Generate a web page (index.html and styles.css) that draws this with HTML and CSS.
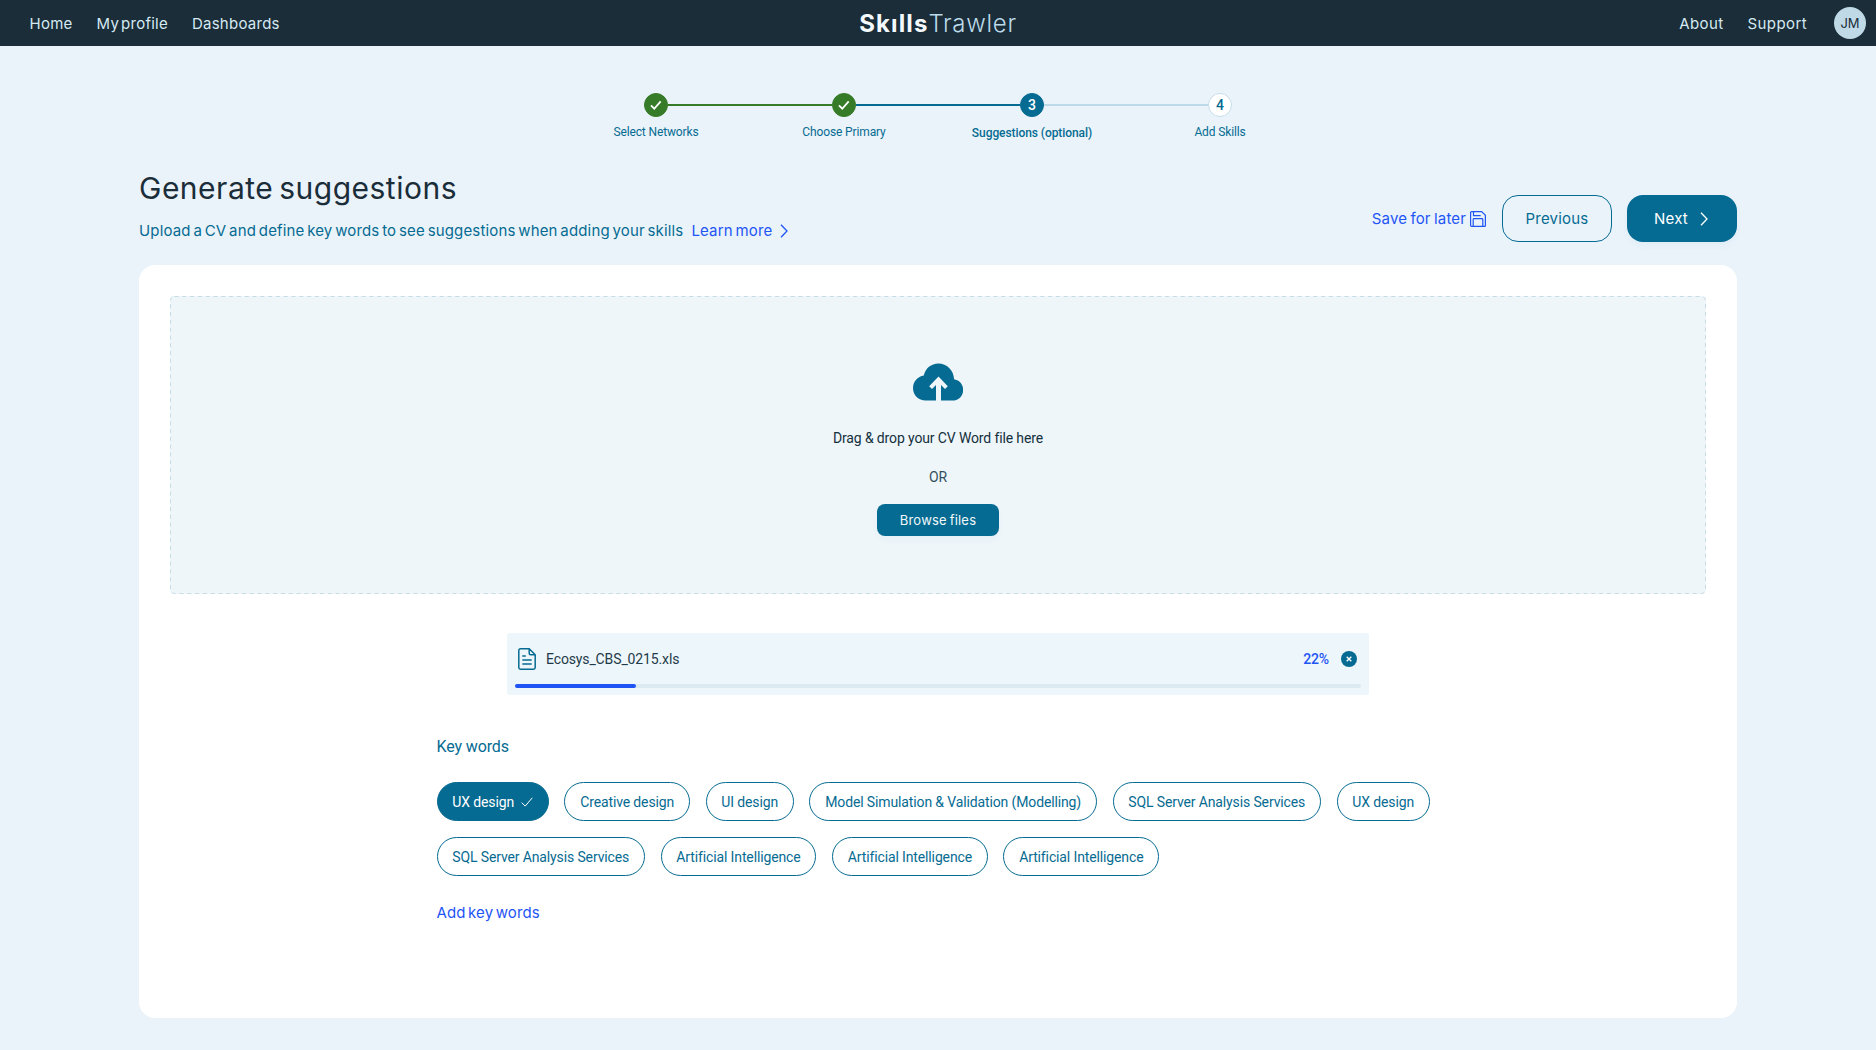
FILE: index.html
```html
<!DOCTYPE html>
<html lang="en">
<head>
    <meta charset="UTF-8">
    <meta name="viewport" content="width=device-width, initial-scale=1.0">
    <title>SkillsTrawler - Generate suggestions</title>
    <link rel="stylesheet" href="styles.css">
</head>
<body>
    <header class="topbar">
        <nav class="nav nav-left">
            <a href="#">Home</a>
            <a href="#">My profile</a>
            <a href="#">Dashboards</a>
        </nav>
        <div class="logo"><b>Skılls</b><span>Trawler</span></div>
        <nav class="nav nav-right">
            <a href="#">About</a>
            <a href="#">Support</a>
            <span class="avatar">JM</span>
        </nav>
    </header>

    <!-- Progress steps -->
    <ol class="stepper">
        <li class="step done">
            <span class="dot"><svg viewBox="0 0 24 24"><path d="M6.5 12.5l3.6 3.6 7-8"/></svg></span>
            <span class="step-label">Select Networks</span>
        </li>
        <li class="step done">
            <span class="dot"><svg viewBox="0 0 24 24"><path d="M6.5 12.5l3.6 3.6 7-8"/></svg></span>
            <span class="step-label">Choose Primary</span>
        </li>
        <li class="step current">
            <span class="dot">3</span>
            <span class="step-label">Suggestions (optional)</span>
        </li>
        <li class="step">
            <span class="dot">4</span>
            <span class="step-label">Add Skills</span>
        </li>
    </ol>

    <main class="container">
        <div class="page-head">
            <div>
                <h1>Generate suggestions</h1>
                <p class="intro">
                    <span>Upload a CV and define key words to see suggestions when adding your skills</span>
                    <a href="#">Learn more</a>
                    <svg class="chevron" viewBox="0 0 8 14"><path d="M1 .8l6 6.2-6 6.2"/></svg>
                </p>
            </div>
            <div class="actions">
                <a href="#" class="save">
                    <span>Save for later</span>
                    <svg viewBox="0 0 16 16"><path d="M.6 1.6a1 1 0 0 1 1-1h10l3.8 3.6v10.200a1 1 0 0 1-1 1H1.600a1 1 0 0 1-1-1z M3.200 15.400V8.500a.8.8 0 0 1 .8-.8h8a.8.8 0 0 1 .8.8v6.900 M3.500.6v4h7.200"/></svg>
                </a>
                <button class="button button-outline">Previous</button>
                <button class="button button-primary">Next
                    <svg class="chevron" viewBox="0 0 8 14"><path d="M1 .8l6 6.2-6 6.2"/></svg>
                </button>
            </div>
        </div>

        <section class="card">
            <!-- Upload area -->
            <div class="dropzone">
                <svg class="dashes"><rect x=".5" y=".5" width="1535" height="297" rx="4"/></svg>
                <svg class="cloud" viewBox="0 0 50 38"><path d="M23 37.500H12.500C5.500 37.500 0 32 0 25.200 0 18.800 4.600 13.600 10.800 12.600 12.300 5.400 18.200.500 25.400.500c8.300 0 15.200 6.500 15.700 15.700C46.200 17 50.200 21.400 50.200 26.800c0 6-4.700 10.700-10.600 10.700H28V22l4 4 2.800-2.800-9.300-9.700-9.300 9.700L19 26l4-4z"/></svg>
                <p class="drop-text">Drag &amp; drop your CV Word file here</p>
                <p class="drop-or">OR</p>
                <button class="browse">Browse files</button>
            </div>

            <!-- File in progress -->
            <div class="file">
                <div class="file-row">
                    <svg class="file-icon" viewBox="0 0 18 22"><path d="M2.500.8h8.700l6 6v12.700a1.700 1.700 0 0 1-1.700 1.700h-13A1.700 1.700 0 0 1 .8 19.500v-17A1.700 1.700 0 0 1 2.500.8z M11.200.8v4.500a1.500 1.500 0 0 0 1.500 1.500h4.500 M4.300 8h3.500 M4.300 12h9.400 M4.300 16h9.400"/></svg>
                    <span class="file-name">Ecosys_CBS_0215.xls</span>
                    <span class="file-percent">22%</span>
                    <svg class="file-cancel" viewBox="0 0 16 16"><circle cx="8" cy="8" r="8"/><path d="M5.700 5.700l4.600 4.600 M10.300 5.700l-4.600 4.600"/></svg>
                </div>
                <div class="progress"><div class="progress-fill"></div></div>
            </div>

            <!-- Key words -->
            <div class="keywords">
                <h2>Key words</h2>
                <div class="chips">
                    <span class="chip selected">UX design <svg viewBox="0 0 12 10"><path d="M.7 5.600l3.500 3.500L11.300.8"/></svg></span>
                    <span class="chip">Creative design</span>
                    <span class="chip">UI design</span>
                    <span class="chip">Model Simulation &amp; Validation (Modelling)</span>
                    <span class="chip">SQL Server Analysis Services</span>
                    <span class="chip">UX design</span>
                    <span class="chip">SQL Server Analysis Services</span>
                    <span class="chip">Artificial Intelligence</span>
                    <span class="chip">Artificial Intelligence</span>
                    <span class="chip">Artificial Intelligence</span>
                </div>
                <a href="#" class="add-link">Add key words</a>
            </div>
        </section>
    </main>
</body>
</html>
```
FILE: styles.css
```css
* {
    box-sizing: border-box;
}
body {
    margin: 0;
    height: 1050px;
    overflow: hidden;
    background-color: #eaf3fa;
    color: #066b92;
    font-family: Roboto, sans-serif;
    font-size: 14px;
    letter-spacing: -0.13px;
}
h1, h2, p, ol {
    margin: 0;
    padding: 0;
    font-weight: 400;
}
a {
    color: #1f55f5;
    text-decoration: none;
}
svg {
    display: block;
    flex: none;
    fill: none;
    stroke: currentColor;
}
button {
    font-family: Inter, sans-serif;
    border: 0;
}

/* Top bar */
.topbar {
    display: grid;
    grid-template-columns: 1fr auto 1fr;
    align-items: center;
    height: 46px;
    padding: 0 10px;
    background-color: #1a2d38;
    font-family: Inter, sans-serif;
}
.nav {
    display: flex;
    align-items: center;
    gap: 24px;
    font-size: 15px;
    letter-spacing: 0.25px;
    word-spacing: -2.5px;
}
.nav a {
    color: #d5e9f3;
}
.nav-left {
    padding-left: 19.5px;
}
.nav-right {
    justify-content: flex-end;
    letter-spacing: 0.4px;
}
.avatar {
    display: flex;
    align-items: center;
    justify-content: center;
    width: 32px;
    height: 32px;
    margin-left: 3px;
    border-radius: 50%;
    background-color: #bfd9e7;
    color: #1a2d38;
    font-size: 13px;
    letter-spacing: 0;
}
.logo {
    display: flex;
    font-size: 24px;
    color: #bcdaea;
}
.logo b {
    color: #f3f9fc;
    font-weight: 700;
    letter-spacing: 1.1px;
}
.logo span {
    font-weight: 300;
    letter-spacing: 0.7px;
}

/* Stepper */
.stepper {
    display: flex;
    justify-content: center;
    width: 752px;
    margin: 47px auto 1px;
    list-style: none;
}
.step {
    position: relative;
    display: flex;
    flex-direction: column;
    align-items: center;
    width: 188px;
    font-size: 12px;
    line-height: 14px;
}
.step:not(:last-child)::after {
    content: "";
    position: absolute;
    top: 11px;
    left: 106px;
    width: 164px;
    height: 2px;
    background-color: #bcdae7;
}
.step:nth-child(1)::after {
    background-color: #357b28;
}
.step:nth-child(2)::after {
    background-color: #066b92;
}
.dot {
    display: flex;
    align-items: center;
    justify-content: center;
    width: 24px;
    height: 24px;
    margin-bottom: 8px;
    border: 1px solid #c6dfea;
    border-radius: 50%;
    background-color: #fff;
    font-size: 14px;
    font-weight: 500;
}
.dot svg {
    width: 22px;
    height: 22px;
    stroke-width: 2;
}
.done .dot {
    border-color: #357b28;
    background-color: #357b28;
    color: #fff;
}
.current .dot {
    border-color: #066b92;
    background-color: #066b92;
    color: #fff;
}
.current .step-label {
    font-weight: 500;
    letter-spacing: -0.07px;
    padding-top: 1px;
}

/* Page heading */
.container {
    width: 1598px;
    margin: 0 auto;
}
.page-head {
    display: flex;
    justify-content: space-between;
    height: 124px;
    font-family: Inter, sans-serif;
}
h1 {
    margin-top: 28px;
    color: #1a2d38;
    font-size: 30px;
    line-height: 38px;
    letter-spacing: 0.5px;
    word-spacing: -3px;
}
.intro {
    display: flex;
    align-items: center;
    margin-top: 14px;
    font-size: 15px;
    line-height: 20px;
    letter-spacing: 0.15px;
    word-spacing: -1.6px;
}
.intro a {
    margin-left: 8px;
}
.chevron {
    width: 8px;
    height: 14px;
    stroke-width: 1.3;
}
.intro .chevron {
    margin-left: 8px;
    color: #1f55f5;
}
.actions {
    display: flex;
    align-items: center;
    height: 47px;
    margin-top: 54px;
    letter-spacing: 0.15px;
}
.save {
    display: flex;
    align-items: center;
    gap: 4px;
    margin-right: 16px;
    font-size: 15px;
    word-spacing: -1px;
}
.save svg {
    width: 16px;
    height: 16px;
    stroke-width: 1.2;
}
.button {
    display: flex;
    align-items: center;
    justify-content: center;
    width: 110px;
    height: 47px;
    border-radius: 16px;
    font-size: 15px;
    letter-spacing: 0.2px;
}
.button-outline {
    margin-right: 15px;
    border: 1px solid #066b92;
    background: transparent;
    color: #066b92;
}
.button-primary {
    gap: 12px;
    padding-left: 4px;
    background-color: #066b92;
    color: #fff;
    box-shadow: 0 4px 6px rgba(6, 107, 146, 0.04);
}

/* Card */
.card {
    height: 753px;
    padding: 31px;
    border-radius: 16px;
    background-color: #fff;
}
.dropzone {
    position: relative;
    display: flex;
    flex-direction: column;
    align-items: center;
    height: 298px;
    padding-top: 67px;
    border-radius: 4px;
    background-color: #eef6fa;
}
.dashes {
    position: absolute;
    top: 0;
    left: 0;
    width: 100%;
    height: 100%;
    stroke: #c5dbe5;
    stroke-dasharray: 4 3.8;
}
.cloud {
    width: 50px;
    height: 38px;
    fill: #066b92;
    stroke: none;
}
.drop-text {
    margin-top: 28px;
    color: #14303d;
    line-height: 18px;
}
.drop-or {
    margin-top: 21px;
    color: #33505e;
    line-height: 18px;
}
.browse {
    width: 122px;
    height: 32px;
    margin-top: 18px;
    border-radius: 8px;
    background-color: #066b92;
    color: #f1f8fb;
    font-size: 13px;
    letter-spacing: 0.2px;
    word-spacing: -1px;
    box-shadow: 0 4px 6px rgba(6, 107, 146, 0.04);
}

/* File progress */
.file {
    width: 862px;
    height: 62px;
    margin: 39px auto 0;
    padding: 14px 8px 0;
    border-radius: 3px;
    background-color: #edf6fa;
}
.file-row {
    display: flex;
    align-items: center;
    height: 23px;
    padding: 0 4px 0 3px;
}
.file-icon {
    width: 18px;
    height: 22px;
    stroke-width: 1.5;
}
.file-name {
    margin-left: 10px;
    color: #1f3b49;
}
.file-percent {
    margin-left: auto;
    color: #1f55f5;
    font-weight: 500;
}
.file-cancel {
    width: 16px;
    height: 16px;
    margin-left: 12px;
}
.file-cancel circle {
    fill: #066b92;
    stroke: none;
}
.file-cancel path {
    stroke: #fff;
    stroke-width: 1.4;
}
.progress {
    height: 4px;
    margin-top: 14px;
    border-radius: 2px;
    background-color: #dceaf2;
}
.progress-fill {
    width: 121px;
    height: 4px;
    border-radius: 2px;
    background-color: #1f55f5;
}

/* Key words */
.keywords {
    width: 1003px;
    margin: 42px auto 0;
}
h2 {
    font-size: 16px;
    line-height: 20px;
}
.chips {
    display: flex;
    flex-wrap: wrap;
    gap: 15.6px;
    margin-top: 25px;
}
.chip {
    display: flex;
    align-items: center;
    height: 39.4px;
    padding: 0 14.8px;
    border: 1px solid #066b92;
    border-radius: 20px;
}
.chip.selected {
    background-color: #066b92;
    color: #fff;
}
.chip svg {
    width: 12px;
    height: 10px;
    margin-left: 7px;
}
.add-link {
    display: inline-block;
    margin-top: 27px;
    font-family: Inter, sans-serif;
    font-size: 15px;
    line-height: 20px;
    letter-spacing: 0.15px;
    word-spacing: -2px;
}
```
